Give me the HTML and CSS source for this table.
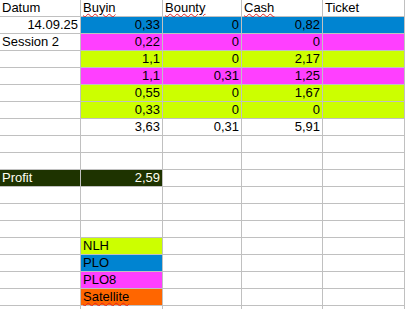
FILE: index.html
```html
<!DOCTYPE html>
<html>
<head>
<meta charset="utf-8">
<link rel="stylesheet" href="styles.css">
</head>
<body>
<div class="sheet">
  <div class="c">Datum</div><div class="c"><span class="sp">Buyin</span></div><div class="c"><span class="sp">Bounty</span></div><div class="c"><span class="sp">Cash</span></div><div class="c">Ticket</div>

  <div class="c r">14.09.25</div><div class="c r blue">0,33</div><div class="c r blue">0</div><div class="c r blue">0,82</div><div class="c blue"></div>
  <div class="c">Session 2</div><div class="c r mag">0,22</div><div class="c r mag">0</div><div class="c r mag">0</div><div class="c mag"></div>
  <div class="c"></div><div class="c r lime">1,1</div><div class="c r lime">0</div><div class="c r lime">2,17</div><div class="c lime"></div>
  <div class="c"></div><div class="c r mag">1,1</div><div class="c r mag">0,31</div><div class="c r mag">1,25</div><div class="c mag"></div>
  <div class="c"></div><div class="c r lime">0,55</div><div class="c r lime">0</div><div class="c r lime">1,67</div><div class="c lime"></div>
  <div class="c"></div><div class="c r lime">0,33</div><div class="c r lime">0</div><div class="c r lime">0</div><div class="c lime"></div>
  <div class="c"></div><div class="c r">3,63</div><div class="c r">0,31</div><div class="c r">5,91</div><div class="c"></div>
  <div class="c"></div><div class="c"></div><div class="c"></div><div class="c"></div><div class="c"></div>
  <div class="c"></div><div class="c"></div><div class="c"></div><div class="c"></div><div class="c"></div>
  <div class="c dark">Profit</div><div class="c r dark">2,59</div><div class="c"></div><div class="c"></div><div class="c"></div>
  <div class="c"></div><div class="c"></div><div class="c"></div><div class="c"></div><div class="c"></div>
  <div class="c"></div><div class="c"></div><div class="c"></div><div class="c"></div><div class="c"></div>
  <div class="c"></div><div class="c"></div><div class="c"></div><div class="c"></div><div class="c"></div>
  <div class="c"></div><div class="c lime">NLH</div><div class="c"></div><div class="c"></div><div class="c"></div>
  <div class="c"></div><div class="c blue">PLO</div><div class="c"></div><div class="c"></div><div class="c"></div>
  <div class="c"></div><div class="c mag">PLO8</div><div class="c"></div><div class="c"></div><div class="c"></div>
  <div class="c"></div><div class="c orange"><span class="sp">Satellite</span></div><div class="c"></div><div class="c"></div><div class="c"></div>
  <div class="c"></div><div class="c"></div><div class="c"></div><div class="c"></div><div class="c"></div>
</div>
</body>
</html>
```

FILE: styles.css
```css
html, body {
  margin: 0;
  padding: 0;
  background: #ffffff;
}

.sheet {
  display: grid;
  grid-template-columns: 80px 81px 78px 80px 81px;
  grid-auto-rows: 16px;
  gap: 1px;
  background: #c0c0c0;
  width: 404px;
  padding-right: 1px;
  padding-bottom: 1px;
  font-family: "Liberation Sans", Arial, sans-serif;
  font-size: 13px;
  line-height: 16px;
  color: #000000;
}

.c {
  background: #ffffff;
  padding: 0 2px;
  white-space: nowrap;
}

.r {
  text-align: right;
}

.blue {
  background: #0084d1;
}

.mag {
  background: #ff3fff;
}

.lime {
  background: #ccff00;
}

.orange {
  background: #ff6600;
}

.dark {
  background: #1e3300;
  color: #fffff2;
}

.sp {
  text-decoration-line: underline;
  text-decoration-style: wavy;
  text-decoration-color: #e02020;
  text-decoration-thickness: 1px;
  text-underline-offset: 1px;
}
```
